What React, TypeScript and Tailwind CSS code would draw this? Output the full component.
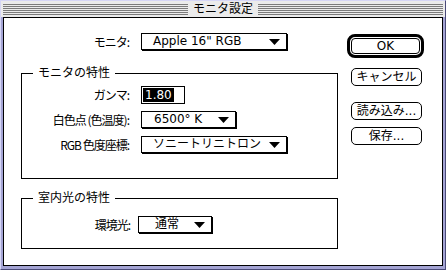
import React from "react";

const Tri = () => (
  <svg width="11" height="6" viewBox="0 0 11 6" className="block">
    <polygon points="0,0 11,0 5.5,6" fill="#000" />
  </svg>
);

function Popup({ cls, pad, text }: { cls: string; pad: string; text: string }) {
  return (
    <div className={`h-[17px] border border-black bg-white shadow-[1px_1px_0_#000] flex items-center ${cls}`}>
      <span className={`${pad} whitespace-nowrap leading-[15px]`}>{text}</span>
      <span className="ml-auto mr-[6px]">
        <Tri />
      </span>
    </div>
  );
}

function Btn({ text, cls }: { text: string; cls?: string }) {
  return (
    <div
      className={`ml-[4px] w-[71px] h-[18px] border border-black rounded-[5px] bg-white flex items-center justify-center leading-[16px] ${cls ?? ""}`}
    >
      {text}
    </div>
  );
}

function Label({ text, cls }: { text: string; cls: string }) {
  return (
    <div className={`text-right whitespace-nowrap leading-[16px] tracking-[-1px] font-['Noto_Sans_CJK_JP',sans-serif] ${cls}`}>{text}</div>
  );
}

function Group({ title, cls, children }: { title: string; cls: string; children: React.ReactNode }) {
  return (
    <div className={`relative w-[317px] border border-black ${cls}`}>
      <span className="absolute left-[11px] top-[-9px] px-[5px] bg-white leading-[16px] whitespace-nowrap">{title}</span>
      {children}
    </div>
  );
}

const Stripes = () => (
  <div className="flex-1 mt-[3px] h-[11px] bg-[repeating-linear-gradient(to_bottom,#7b7b7b_0px,#7b7b7b_1px,#ebebeb_1px,#ebebeb_2px)]" />
);

export default function App() {
  return (
    <div className="w-[446px] h-[270px] flex flex-col bg-[#a4a4d4] border border-t-[#d6d6f6] border-l-[#d6d6f6] border-r-[#4a4a78] border-b-[#4a4a78] text-black text-[12px] font-['DejaVu_Sans','Noto_Sans_CJK_JP',sans-serif]">
      {/* title bar */}
      <div className="h-[16px] flex items-start px-[2px] bg-[#ebebeb]">
        <Stripes />
        <div className="w-[70px] h-[16px] leading-[16px] text-center whitespace-nowrap">モニタ設定</div>
        <Stripes />
      </div>

      {/* content */}
      <div className="mx-[2px] mb-[3px] flex-1 border border-black bg-white flex">
        {/* left column */}
        <div className="w-[343px] pl-[17px] pt-[15px] flex flex-col">
          <div className="h-[17px] flex items-center">
            <Label text="モニタ:" cls="w-[108px]" />
            <div className="ml-[12px]">
              <Popup cls="w-[146px]" pad="pl-[11px]" text={"Apple 16\" RGB"} />
            </div>
          </div>

          <Group title="モニタの特性" cls="mt-[23px] h-[106px] pt-[12px]">
            <div className="h-[18px] flex items-center">
              <Label text="ガンマ:" cls="w-[107px]" />
              <div className="ml-[12px] w-[44px] h-[18px] border border-black bg-white p-[1px] flex">
                <div className="bg-black text-white px-[2px] leading-[14px]">1.80</div>
              </div>
            </div>
            <div className="mt-[7px] h-[17px] flex items-center">
              <Label text="白色点 (色温度):" cls="w-[107px]" />
              <div className="ml-[12px]">
                <Popup cls="w-[95px]" pad="pl-[12px]" text="6500° K" />
              </div>
            </div>
            <div className="mt-[8px] h-[17px] flex items-center">
              <Label text="RGB 色度座標:" cls="w-[107px]" />
              <div className="ml-[12px]">
                <Popup cls="w-[146px]" pad="pl-[11px]" text="ソニートリニトロン" />
              </div>
            </div>
          </Group>

          <Group title="室内光の特性" cls="mt-[19px] h-[51px] pt-[17px]">
            <div className="h-[17px] flex items-center">
              <Label text="環境光:" cls="w-[108px]" />
              <div className="ml-[8px]">
                <Popup cls="w-[74px]" pad="pl-[16px]" text="通常" />
              </div>
            </div>
          </Group>
        </div>

        {/* right column */}
        <div className="pt-[16px] flex flex-col">
          <div className="w-[77px] h-[24px] border-[3px] border-black rounded-[8px] p-[1px]">
            <div className="h-full border border-black rounded-[4px] flex items-center justify-center leading-[14px]">OK</div>
          </div>
          <Btn text="キャンセル" cls="mt-[10px]" />
          <Btn text="読み込み..." cls="mt-[16px]" />
          <Btn text="保存..." cls="mt-[7px]" />
        </div>
      </div>
    </div>
  );
}
